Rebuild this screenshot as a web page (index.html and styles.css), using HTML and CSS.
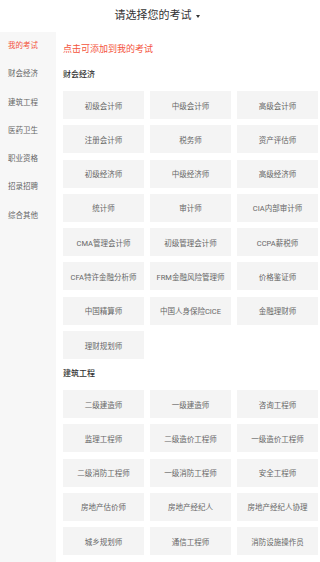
FILE: index.html
```html
<!DOCTYPE html>
<html lang="zh-CN">
<head>
<meta charset="utf-8">
<title>请选择您的考试</title>
<link rel="stylesheet" href="styles.css">
</head>
<body>
<div class="page">
  <header class="header">
    <span class="title">请选择您的考试</span><span class="caret"></span>
  </header>
  <div class="main">
    <nav class="sidebar">
      <div class="nav-item active">我的考试</div>
      <div class="nav-item">财会经济</div>
      <div class="nav-item">建筑工程</div>
      <div class="nav-item">医药卫生</div>
      <div class="nav-item">职业资格</div>
      <div class="nav-item">招录招聘</div>
      <div class="nav-item">综合其他</div>
    </nav>
    <div class="content">
      <div class="tip">点击可添加到我的考试</div>
      <section class="section">
        <h2 class="section-title">财会经济</h2>
        <div class="grid">
          <div class="cell">初级会计师</div>
          <div class="cell">中级会计师</div>
          <div class="cell">高级会计师</div>
          <div class="cell">注册会计师</div>
          <div class="cell">税务师</div>
          <div class="cell">资产评估师</div>
          <div class="cell">初级经济师</div>
          <div class="cell">中级经济师</div>
          <div class="cell">高级经济师</div>
          <div class="cell">统计师</div>
          <div class="cell">审计师</div>
          <div class="cell">CIA内部审计师</div>
          <div class="cell">CMA管理会计师</div>
          <div class="cell">初级管理会计师</div>
          <div class="cell">CCPA薪税师</div>
          <div class="cell">CFA特许金融分析师</div>
          <div class="cell">FRM金融风险管理师</div>
          <div class="cell">价格鉴证师</div>
          <div class="cell">中国精算师</div>
          <div class="cell">中国人身保险CICE</div>
          <div class="cell">金融理财师</div>
          <div class="cell">理财规划师</div>
        </div>
      </section>
      <section class="section">
        <h2 class="section-title">建筑工程</h2>
        <div class="grid">
          <div class="cell">二级建造师</div>
          <div class="cell">一级建造师</div>
          <div class="cell">咨询工程师</div>
          <div class="cell">监理工程师</div>
          <div class="cell">二级造价工程师</div>
          <div class="cell">一级造价工程师</div>
          <div class="cell">二级消防工程师</div>
          <div class="cell">一级消防工程师</div>
          <div class="cell">安全工程师</div>
          <div class="cell">房地产估价师</div>
          <div class="cell">房地产经纪人</div>
          <div class="cell">房地产经纪人协理</div>
          <div class="cell">城乡规划师</div>
          <div class="cell">通信工程师</div>
          <div class="cell">消防设施操作员</div>
        </div>
      </section>
    </div>
  </div>
</div>
</body>
</html>
```

FILE: styles.css
```css
* {
  box-sizing: border-box;
  margin: 0;
  padding: 0;
}

html, body {
  width: 320px;
  height: 562px;
  overflow: hidden;
  background: #ffffff;
}

body {
  font-family: Roboto, "Noto Sans CJK SC", sans-serif;
  color: #333333;
}

.page {
  display: flex;
  flex-direction: column;
  height: 562px;
}

.header {
  height: 32px;
  flex: none;
  display: flex;
  align-items: center;
  justify-content: center;
  gap: 4px;
  padding-right: 6px;
  background: #ffffff;
}

.title {
  font-size: 11px;
  line-height: 32px;
  color: #333333;
}

.caret {
  width: 0;
  height: 0;
  border-left: 2.5px solid transparent;
  border-right: 2.5px solid transparent;
  border-top: 3px solid #333333;
  margin-top: 1px;
}

.main {
  flex: 1;
  display: flex;
  min-height: 0;
}

.sidebar {
  width: 56px;
  flex: none;
  background: #f7f7f7;
}

.nav-item {
  height: 28.3px;
  line-height: 28.3px;
  padding-left: 8px;
  font-size: 7.5px;
  color: #666666;
}

.nav-item.active {
  color: #f4533c;
}

.content {
  flex: 1;
  padding: 0 2px 0 7px;
  overflow: hidden;
}

.tip {
  padding-top: 7px;
  line-height: 21px;
  font-size: 9px;
  color: #f4533c;
}

.section {
  padding-top: 5px;
}

.section-title {
  font-size: 8px;
  font-weight: 500;
  line-height: 20px;
  color: #333333;
  margin-bottom: 6px;
}

.grid {
  display: grid;
  grid-template-columns: repeat(3, 81px);
  column-gap: 6px;
  row-gap: 6.3px;
}

.cell {
  height: 28px;
  background: #f4f4f4;
  display: flex;
  align-items: center;
  justify-content: center;
  font-size: 7.5px;
  color: #666666;
  white-space: nowrap;
}
```
